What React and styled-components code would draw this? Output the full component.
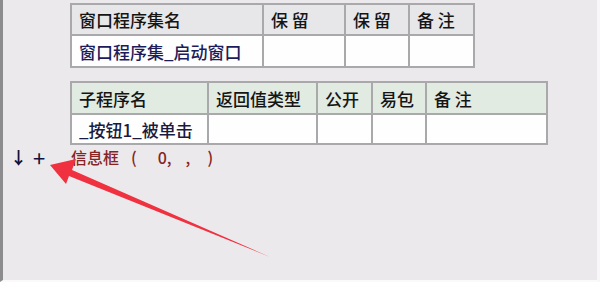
import styled, { createGlobalStyle } from 'styled-components';

const Global = createGlobalStyle`
  html, body {
    margin: 0;
    padding: 0;
    background: #ebe9ec;
  }
  * { box-sizing: border-box; }
`;

const Frame = styled.div`
  position: relative;
  width: 600px;
  height: 282px;
  background: #ebe9ec;
  border-left: 3px solid #8c8b8e;
  border-right: 3px solid #f7f7f8;
  border-bottom: 2px solid #fafafa;
  font-family: "Noto Sans CJK SC", "Noto Sans", sans-serif;
  padding-top: 3px;
  display: flex;
  flex-direction: column;
`;

const Table = styled.table`
  border-collapse: collapse;
  margin-left: 67px;
  margin-bottom: ${(p) => p.$gap || 0}px;
  width: ${(p) => p.$w}px;
  table-layout: fixed;
  font-size: 17px;
  th, td {
    border: 2px solid #a9a8ab;
    padding: 0 0 0 7px;
    text-align: left;
    font-weight: 500;
    white-space: nowrap;
    overflow: hidden;
  }
  th {
    height: ${(p) => p.$headH}px;
    background: ${(p) => p.$head};
    color: #151515;
  }
  td {
    height: ${(p) => p.$rowH}px;
    background: #fefefe;
    color: ${(p) => p.$ink || '#1c1c5a'};
  }
`;

const Col = styled.col`
  width: ${(p) => p.$w}px;
`;

const CodeLine = styled.div`
  display: flex;
  align-items: center;
  height: 20px;
  margin-top: 2px;
  padding-left: 7px;
  font-size: 16px;
`;

const Mark = styled.span`
  color: #10103a;
  font-size: ${(p) => p.$size}px;
  font-weight: ${(p) => p.$weight};
  width: ${(p) => p.$w}px;
  text-align: center;
  line-height: 20px;
`;

const Token = styled.span`
  color: #862424;
  font-weight: 500;
  margin-left: ${(p) => p.$ml}px;
`;

const Arrow = styled.svg`
  position: absolute;
  left: 0;
  top: 0;
  pointer-events: none;
`;

const first = [
  { w: 192, head: '窗口程序集名', cell: '窗口程序集_启动窗口' },
  { w: 82, head: '保 留' },
  { w: 64, head: '保 留' },
  { w: 65, head: '备 注' },
];

const second = [
  { w: 137, head: '子程序名', cell: '_按钮1_被单击' },
  { w: 109, head: '返回值类型' },
  { w: 55, head: '公开' },
  { w: 54, head: '易包' },
  { w: 121, head: '备 注' },
];

function Grid({ cols, ...rest }) {
  return (
    <Table $w={cols.reduce((s, c) => s + c.w, 0)} {...rest}>
      <colgroup>
        {cols.map((c, i) => (
          <Col key={i} $w={c.w} />
        ))}
      </colgroup>
      <thead>
        <tr>
          {cols.map((c, i) => (
            <th key={i}>{c.head}</th>
          ))}
        </tr>
      </thead>
      <tbody>
        <tr>
          {cols.map((c, i) => (
            <td key={i}>{c.cell}</td>
          ))}
        </tr>
      </tbody>
    </Table>
  );
}

export default function App() {
  return (
    <>
      <Global />
      <Frame>
        <Grid cols={first} $head="#e7e6e8" $headH={31} $rowH={32} $gap={13} />
        <Grid cols={second} $head="#e2ebe1" $headH={32} $rowH={30} $ink="#1a1a40" />
        <CodeLine>
          <Mark $w={14} $size={17} $weight={700}>↓</Mark>
          <Mark $w={30} $size={22} $weight={400}>+</Mark>
          <Token $ml={17}>信息框</Token>
          <Token $ml={12}>(</Token>
          <Token $ml={21}>0,</Token>
          <Token $ml={14}>,</Token>
          <Token $ml={17}>)</Token>
        </CodeLine>
        <Arrow width="600" height="282" viewBox="0 0 600 282">
          <path
            d="M47 165 L73 159 L69 170 L267 257 L66 176 L63 184 Z"
            fill="#f0313f"
          />
        </Arrow>
      </Frame>
    </>
  );
}
